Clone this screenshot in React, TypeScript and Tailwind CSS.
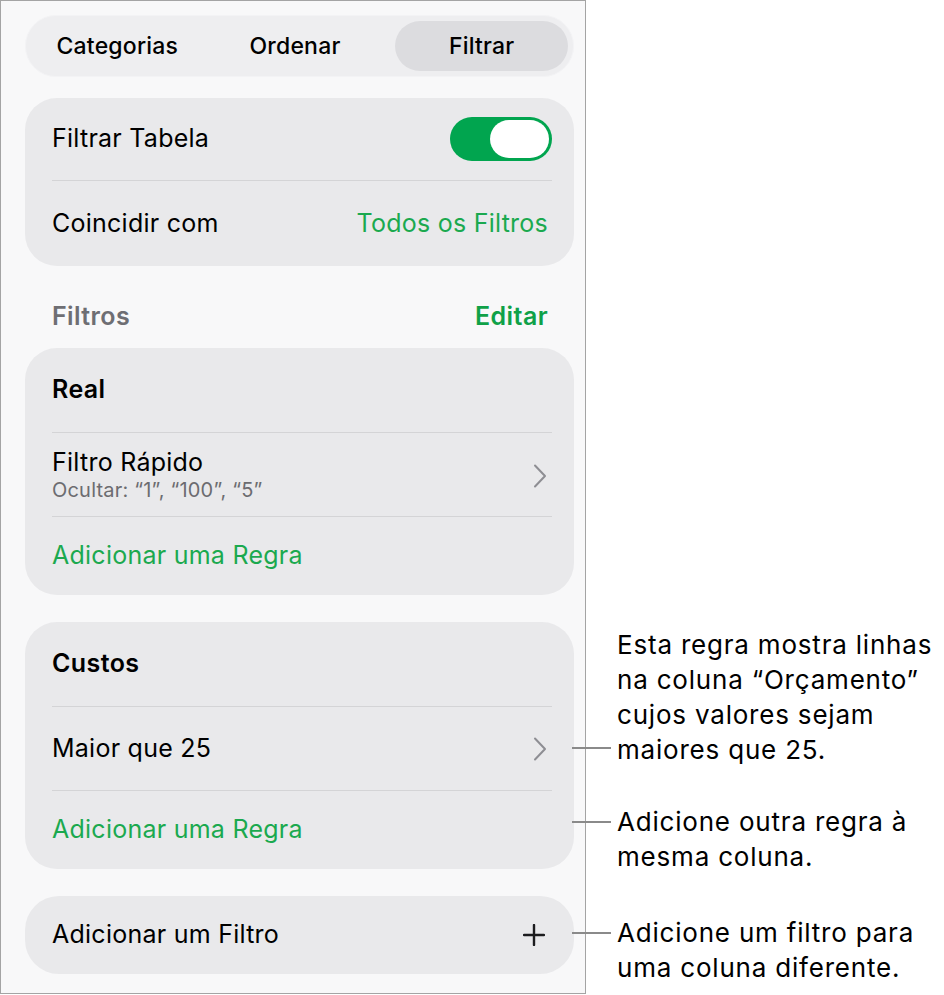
import React from "react";

const font = { fontFamily: 'Inter, "Noto Sans", "Liberation Sans", sans-serif' };

function Chevron() {
  return (
    <svg width="14" height="24" viewBox="0 0 14 24" fill="none">
      <path d="M2 1.5 L12 12 L2 22.5" stroke="#8e8e93" strokeWidth="2" strokeLinecap="round" strokeLinejoin="round" />
    </svg>
  );
}

function Plus() {
  return (
    <svg width="22" height="22" viewBox="0 0 22 22" fill="none">
      <path d="M11 1 V21 M1 11 H21" stroke="#1c1c1e" strokeWidth="2.4" strokeLinecap="round" />
    </svg>
  );
}

function Divider() {
  return <div className="h-px bg-[#d4d4d6]" />;
}

export default function App() {
  return (
    <div className="w-[944px] h-[995px] bg-white flex text-black" style={font}>
      {/* Left panel */}
      <div className="w-[586px] h-[994px] border border-[#a4a4a4] bg-[#f8f8f9] pl-[24px] pr-[11px] pt-[14px] flex flex-col">
        {/* Segmented */}
        <div className="h-[62px] rounded-full bg-[#eeeef0] border border-[#f3f3f5] p-[5px] flex items-center text-[23px] font-medium tracking-[0.2px]">
          <div className="flex-1 h-full flex items-center justify-center">Categorias</div>
          <div className="flex-1 h-full flex items-center justify-center pl-[5px]">Ordenar</div>
          <div className="flex-1 h-full flex pl-[14px]">
            <div className="flex-1 h-full flex items-center justify-center rounded-full bg-[#dcdcdf]">Filtrar</div>
          </div>
        </div>

        {/* Card 1 */}
        <div className="mt-[21px] rounded-[32px] bg-[#e9e9eb] pl-[27px] pr-[22px] text-[25px] tracking-[0.25px]">
          <div className="h-[82px] flex items-center justify-between">
            <span>Filtrar Tabela</span>
            <div className="w-[102px] h-[44px] rounded-full bg-[#01a54f] p-[3px] flex justify-end">
              <div className="w-[59px] h-[38px] rounded-full bg-white" />
            </div>
          </div>
          <Divider />
          <div className="h-[85px] flex items-center justify-between">
            <span>Coincidir com</span>
            <span className="text-[#1ba94f] pr-[4px]">Todos os Filtros</span>
          </div>
        </div>

        {/* Section header */}
        <div className="h-[82px] flex items-center justify-between pl-[27px] pr-[26px] pt-[19px] text-[25px] font-semibold tracking-[0.4px]">
          <span className="text-[#6e6e73]">Filtros</span>
          <span className="text-[#0fa148]">Editar</span>
        </div>

        {/* Card 2 */}
        <div className="rounded-[32px] bg-[#e9e9eb] pl-[27px] pr-[22px] text-[25px] tracking-[0.25px]">
          <div className="h-[84px] flex items-center font-semibold tracking-[0.4px]">Real</div>
          <Divider />
          <div className="h-[83px] flex items-center justify-between">
            <div className="flex flex-col">
              <span className="leading-[30px]">Filtro Rápido</span>
              <span className="text-[20px] text-[#6c6c70] leading-[26px] tracking-[0.2px]">Ocultar: “1”, “100”, “5”</span>
            </div>
            <div className="pr-[5px] pt-[2px]"><Chevron /></div>
          </div>
          <Divider />
          <div className="h-[78px] flex items-center text-[#1ba94f]">Adicionar uma Regra</div>
        </div>

        {/* Card 3 */}
        <div className="mt-[27px] rounded-[32px] bg-[#e9e9eb] pl-[27px] pr-[22px] text-[25px] tracking-[0.25px]">
          <div className="h-[84px] flex items-center font-semibold tracking-[0.4px]">Custos</div>
          <Divider />
          <div className="h-[83px] flex items-center justify-between">
            <span>Maior que 25</span>
            <div className="pr-[5px]"><Chevron /></div>
          </div>
          <Divider />
          <div className="h-[78px] flex items-center text-[#1ba94f]">Adicionar uma Regra</div>
        </div>

        {/* Card 4 */}
        <div className="mt-[27px] h-[78px] rounded-[34px] bg-[#e9e9eb] pl-[27px] pr-[29px] text-[25px] tracking-[0.25px] flex items-center justify-between">
          <span>Adicionar um Filtro</span>
          <Plus />
        </div>
      </div>

      {/* Annotations */}
      <div className="flex-1 pl-[31px] pt-[627px] text-[26px] leading-[35px] text-black tracking-[0.8px] whitespace-nowrap">
        <div className="relative">
          <div className="absolute left-[-45px] top-[120px] w-[39px] h-[2px] bg-[#8a8a8a]" />
          <p>Esta regra mostra linhas</p>
          <p>na coluna “Orçamento”</p>
          <p>cujos valores sejam</p>
          <p>maiores que 25.</p>
        </div>
        <div className="relative mt-[37px]">
          <div className="absolute left-[-45px] top-[17px] w-[39px] h-[2px] bg-[#8a8a8a]" />
          <p>Adicione outra regra à</p>
          <p>mesma coluna.</p>
        </div>
        <div className="relative mt-[41px]">
          <div className="absolute left-[-45px] top-[17px] w-[39px] h-[2px] bg-[#8a8a8a]" />
          <p>Adicione um filtro para</p>
          <p>uma coluna diferente.</p>
        </div>
      </div>
    </div>
  );
}
